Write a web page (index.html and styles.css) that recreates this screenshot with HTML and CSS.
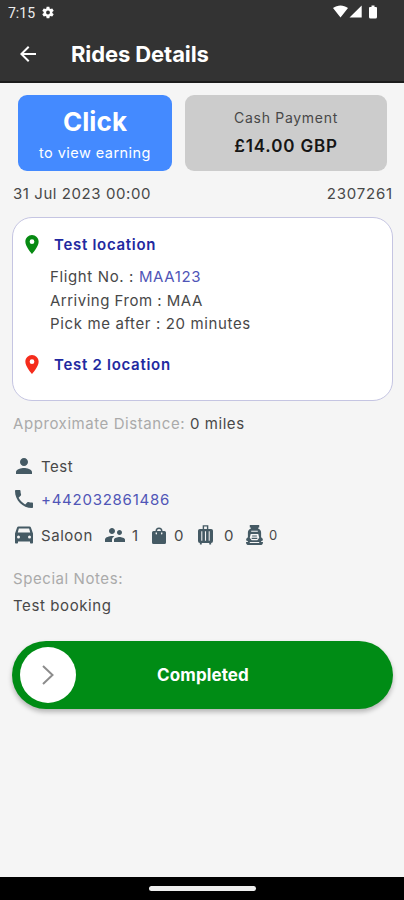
FILE: index.html
```
<!DOCTYPE html>
<html lang="en">
<head>
<meta charset="utf-8">
<title>Rides Details</title>
<link rel="stylesheet" href="styles.css">
</head>
<body>
<div class="screen">
  <header class="top">
    <div class="status">
      <span class="clock">7:15</span>
      <svg class="gear" viewBox="2 2 20 20"><path d="M19.14 12.94c.04-.3.06-.61.06-.94 0-.32-.02-.64-.07-.94l2.03-1.58c.18-.14.23-.41.12-.61l-1.92-3.32c-.12-.22-.37-.29-.59-.22l-2.39.96c-.5-.38-1.03-.7-1.62-.94l-.36-2.54c-.04-.24-.24-.41-.48-.41h-3.84c-.24 0-.43.17-.47.41l-.36 2.54c-.59.24-1.13.57-1.62.94l-2.39-.96c-.22-.08-.47 0-.59.22L2.74 8.87c-.12.21-.08.47.12.61l2.03 1.58c-.05.3-.09.63-.09.94s.02.64.07.94l-2.03 1.58c-.18.14-.23.41-.12.61l1.92 3.32c.12.22.37.29.59.22l2.39-.96c.5.38 1.03.7 1.62.94l.36 2.54c.05.24.24.41.48.41h3.84c.24 0 .44-.17.47-.41l.36-2.54c.59-.24 1.13-.56 1.62-.94l2.39.96c.22.08.47 0 .59-.22l1.92-3.32c.12-.22.07-.47-.12-.61l-2.01-1.58zM12 15.2a3.2 3.2 0 1 1 0-6.4 3.2 3.2 0 0 1 0 6.4z"/></svg>
      <svg class="signals" viewBox="0 0 46 15"><path d="M0 3.1C4.5-.5 10.5-.5 15 3.1L7.5 12.5zM28.7.5v12H16.5zM37 2h1.5V.4h3V2H43q1 0 1 1v9q0 1.5-1.5 1.5h-5Q36 13.500 36 12V3q0-1 1-1z"/></svg>
    </div>
    <div class="bar">
      <svg class="back" viewBox="4 4 16 16"><path d="M20 11H7.83l5.59-5.59L12 4l-8 8 8 8 1.41-1.41L7.83 13H20z"/></svg>
      <h1>Rides Details</h1>
    </div>
  </header>
  <main>
    <div class="tiles">
      <div class="tile earn"><strong>Click</strong><span>to view earning</span></div>
      <div class="tile pay"><span>Cash Payment</span><strong>£14.00 GBP</strong></div>
    </div>
    <div class="meta"><span class="date">31 Jul 2023 00:00</span><span class="ref">2307261</span></div>
    <section class="card">
      <div class="place"><svg class="pin green" viewBox="5 2 14 20"><path d="M12 2C8.13 2 5 5.13 5 9c0 5.25 7 13 7 13s7-7.75 7-13c0-3.87-3.13-7-7-7zm0 9.5a2.5 2.5 0 0 1 0-5 2.5 2.5 0 0 1 0 5z"/></svg><b>Test location</b></div>
      <div class="flight">
        <p>Flight No. : <a>MAA123</a></p>
        <p class="from">Arriving From : MAA</p>
        <p>Pick me after : 20 minutes</p>
      </div>
      <div class="place"><svg class="pin red" viewBox="5 2 14 20"><path d="M12 2C8.13 2 5 5.13 5 9c0 5.25 7 13 7 13s7-7.75 7-13c0-3.87-3.13-7-7-7zm0 9.5a2.5 2.5 0 0 1 0-5 2.5 2.5 0 0 1 0 5z"/></svg><b>Test 2 location</b></div>
    </section>
    <p class="distance"><span class="muted">Approximate Distance:</span> 0 miles</p>
    <div class="row person"><svg class="ic" viewBox="4 4 16 16"><path d="M12 12c2.21 0 4-1.79 4-4s-1.790-4-4-4-4 1.790-4 4 1.790 4 4 4zm0 2c-2.670 0-8 1.340-8 4v2h16v-2c0-2.660-5.330-4-8-4z"/></svg><span>Test</span></div>
    <div class="row phone"><svg class="ic" viewBox="3 3 18 18"><path d="M6.62 10.79c1.44 2.83 3.76 5.14 6.59 6.59l2.2-2.2c.27-.27.67-.36 1.02-.24 1.12.37 2.33.57 3.57.57.55 0 1 .45 1 1V20c0 .55-.45 1-1 1-9.39 0-17-7.61-17-17 0-.55.45-1 1-1h3.500c.55 0 1 .45 1 1 0 1.250.2 2.450.57 3.570.11.35.03.74-.25 1.020l-2.200 2.200z"/></svg><a>+442032861486</a></div>
    <div class="row vehicle">
      <svg class="ic" viewBox="3 4 18 17"><path d="M18.92 5.01C18.72 4.42 18.16 4 17.5 4h-11c-.66 0-1.21.42-1.42 1.01L3 11v9c0 .55.45 1 1 1h1c.55 0 1-.45 1-1v-1h12v1c0 .55.45 1 1 1h1c.55 0 1-.45 1-1v-9l-2.08-5.99zM6.85 6h10.29l1.08 4H5.77l1.08-4zM6.5 16a1.5 1.5 0 1 1 0-3 1.5 1.5 0 0 1 0 3zm11 0a1.5 1.5 0 1 1 0-3 1.5 1.5 0 0 1 0 3z"/></svg>
      <span class="type">Saloon</span>
      <svg class="people" viewBox="2 5 20 14"><path d="M16.5 12c1.38 0 2.49-1.12 2.49-2.5S17.88 7 16.5 7 14 8.12 14 9.5s1.12 2.5 2.5 2.5zM9 11c1.66 0 2.99-1.34 2.99-3S10.66 5 9 5 6 6.34 6 8s1.34 3 3 3zm7.5 3c-1.83 0-5.5.92-5.5 2.75V19h11v-2.25c0-1.83-3.67-2.75-5.5-2.75zM9 13c-2.33 0-7 1.17-7 3.5V19h7v-2.25c0-.85.33-2.34 2.37-3.47C10.5 13.1 9.66 13 9 13z"/></svg>
      <span class="n1">1</span>
      <svg class="bag" viewBox="0 0 14 17"><path fill-rule="evenodd" d="M1.5 4H3.5a3.5 3.5 0 0 1 7 0h2Q14 4 14 5.5v10q0 1.5-1.5 1.5h-11Q0 17 0 15.5v-10Q0 4 1.500 4zM5 4h4a2 2 0 0 0-4 0zM3.600 5.500v1.300q0 .7.700.7t.7-.7V5.500zm5.400 0v1.300q0 .7.700.7t.7-.7V5.500z"/></svg>
      <span class="n2">0</span>
      <svg class="case" viewBox="0 0 16 21"><path fill-rule="evenodd" d="M5 0h6v4h3q2 0 2 2v11q0 2-2 2v1.500h-2V19H4v1.500H2V19q-2 0-2-2V6q0-2 2-2h3zm1.500 1.400V4h3V1.400zM3.500 6.500v10h1.100v-10zm3.900 0v10h1.200v-10zm4 0v10h1.100v-10z"/></svg>
      <span class="n3">0</span>
      <svg class="pack" viewBox="0 0 18 21"><path fill-rule="evenodd" d="M4 0h10v2.500h-1V4q3 1 3 4v5q2 1 2 3l-2 1v1h2q0 3-2 3H2q-2 0-2-3h2v-1l-2-1q0-2 2-3V8q0-3 3-4V2.500H4zM5.500 6v1h7V6zM5 9.500l-1 4 2 2.500h6l2-2.500-1-4zM4 18v1h10v-1z"/><path d="M6.500 11h5v1.200h-5zM6 13.500h6v1.200H6z"/></svg>
      <span class="n4">0</span>
    </div>
    <p class="label muted">Special Notes:</p>
    <p class="notes">Test booking</p>
    <div class="slider">
      <div class="knob"><svg viewBox="0 0 12 20"><path d="M1 1l9.500 9L1 19"/></svg></div>
      <span>Completed</span>
    </div>
  </main>
  <footer><i></i></footer>
</div>
</body>
</html>
```
FILE: styles.css
```
* { box-sizing: border-box; margin: 0; }
body { width: 404px; height: 900px; overflow: hidden; font-family: Inter, sans-serif; font-size: 15px; color: #484848; background: #f5f5f5; }
.screen { height: 900px; display: flex; flex-direction: column; }
svg { display: block; flex: none; }
.top { height: 83px; background: #333; border-bottom: 2px solid #1c1c1c; color: #fff; fill: #fff; }
.status { height: 25px; display: flex; align-items: center; padding: 0 25px 0 8px; }
.clock { font-family: Roboto, sans-serif; font-size: 14px; width: 34px; color: #eee; }
.gear { width: 12px; height: 13px; }
.signals { width: 46px; height: 15px; margin-left: auto; }
.bar { height: 57px; display: flex; align-items: center; padding-left: 20px; }
.back { width: 16px; height: 16px; margin-right: 35px; }
h1 { font-size: 22px; line-height: 28px; font-weight: 650; letter-spacing: -.1px; }
main { flex: 1; padding: 12px 11px 0 12px; }
.tiles { display: flex; gap: 13px; padding: 0 6px; height: 76px; }
.tile { border-radius: 9px; display: flex; flex-direction: column; align-items: center; }
.earn { width: 154px; background: #448aff; color: #fff; padding-top: 11px; }
.earn strong { font-size: 26px; line-height: 32px; font-weight: 700; letter-spacing: .1px; }
.earn span { margin-top: 5px; line-height: 20px; font-size: 14.5px; letter-spacing: .45px; }
.pay { width: 202px; background: #ccc; padding-top: 13px; }
.pay span { line-height: 20px; font-size: 14px; letter-spacing: .7px; }
.pay strong { color: #151515; line-height: 24px; margin-top: 6px; font-size: 17px; font-weight: 600; letter-spacing: .85px; }
.meta { display: flex; justify-content: space-between; padding: 0 0 0 1px; margin-top: 13px; line-height: 20px; letter-spacing: .57px; }
.ref { letter-spacing: .8px; }
.card { margin-top: 13px; height: 184px; background: #fff; border: 1px solid #c5c5e2; border-radius: 20px; padding: 16px 12px 0; }
.place { display: flex; align-items: center; height: 20px; }
.place b { color: #2229a0; font-weight: 600; font-size: 15px; letter-spacing: .71px; margin-left: 15px; }
.pin { width: 14px; height: 19px; }
.green { fill: #078a12; }
.red { fill: #f52c1c; }
.flight { padding: 11px 0 0 25px; height: 100px; line-height: 23.7px; letter-spacing: .63px; }
.from { letter-spacing: .5px; }
a { color: #5055b7; }
.distance { margin: 11px 0 0 1px; line-height: 24px; letter-spacing: .57px; }
.muted { color: #aaa; }
.row { display: flex; align-items: center; fill: #455a64; letter-spacing: .55px; }
.ic { width: 18px; height: 18px; margin: 0 8px 0 3px; }
.person .ic { width: 16px; height: 16px; margin: 0 9px 0 4px; }
.person { height: 24px; margin-top: 18px; }
.phone { height: 24px; margin-top: 9px; letter-spacing: .75px; }
.vehicle { height: 24px; margin-top: 12px; }
.type { width: 64px; }
.people { width: 20px; height: 14px; }
.n1 { width: 20px; margin-left: 7px; }
.bag { width: 14px; height: 17px; }
.n2 { width: 24px; margin-left: 8px; }
.case { width: 15px; height: 20px; }
.n3 { width: 22px; margin-left: 11px; }
.pack { width: 17px; height: 20px; }
.n4 { margin-left: 6px; font-size: 13px; }
.label { margin: 20px 0 0 1px; line-height: 24px; letter-spacing: .57px; }
.notes { margin: 3px 0 0 1px; line-height: 24px; letter-spacing: .6px; }
.slider { margin-top: 23px; height: 68px; border-radius: 34px; background: #008c15; display: flex; align-items: center; padding-left: 8px; color: #fff; box-shadow: 0 3px 5px #0004; }
.knob { width: 56px; height: 56px; border-radius: 50%; background: #fff; display: flex; align-items: center; justify-content: center; }
.knob svg { width: 12px; height: 20px; fill: none; stroke: #8c8c8c; stroke-width: 2; }
.slider span { flex: 1; text-align: center; padding-right: 63px; font-size: 17px; font-weight: 700; letter-spacing: .1px; }
footer { height: 23px; background: #000; display: flex; justify-content: center; padding-top: 9px; }
footer i { width: 107px; height: 5px; border-radius: 3px; background: #eee; }
```
